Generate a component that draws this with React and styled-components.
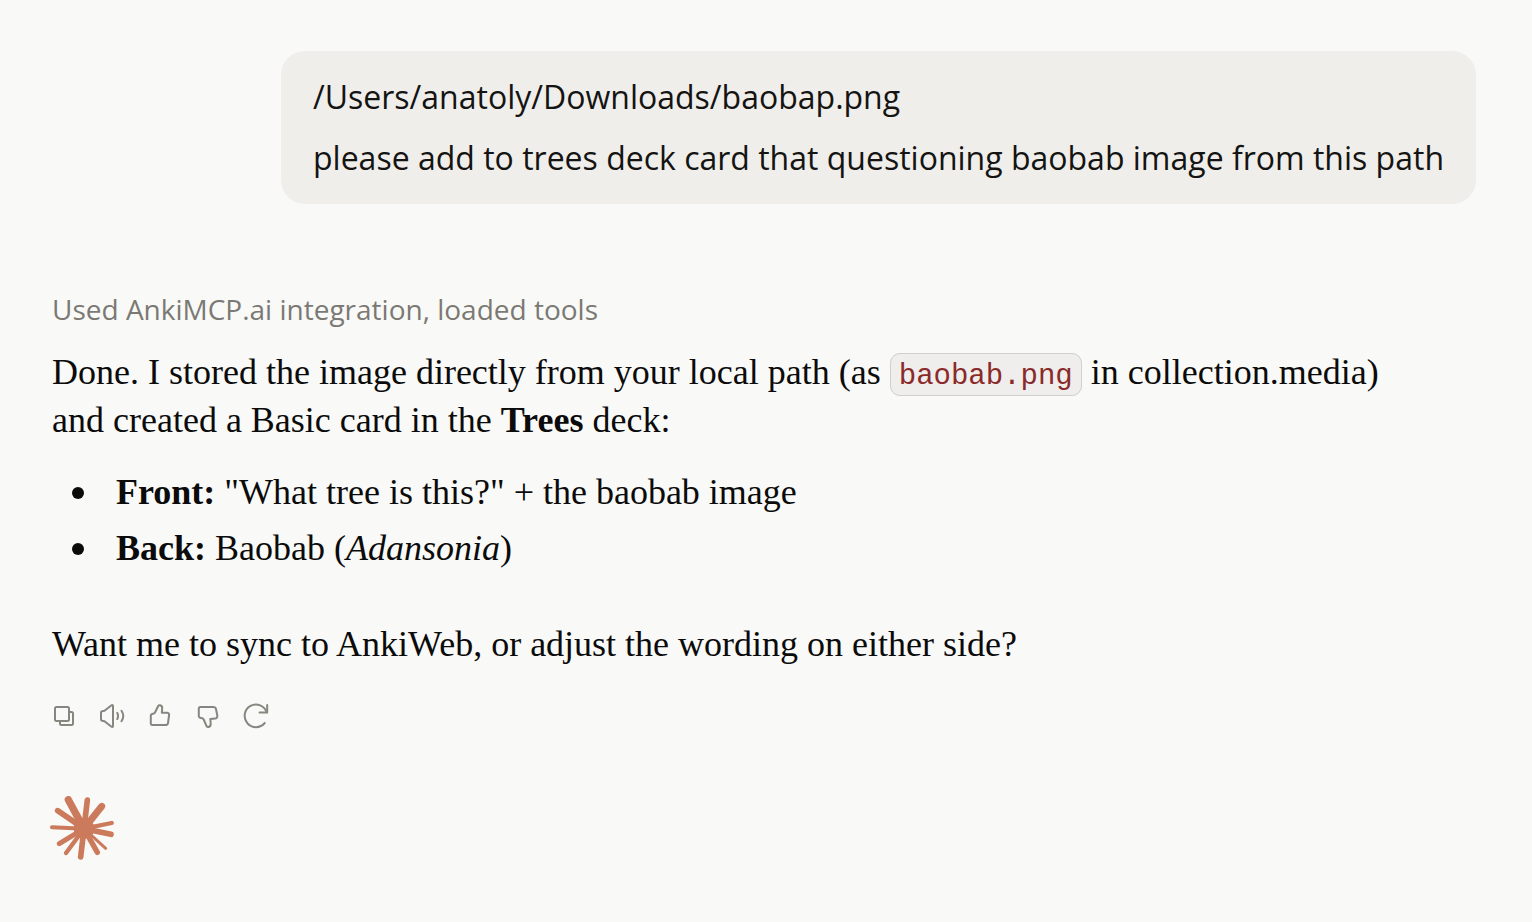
import React from 'react';
import styled, { createGlobalStyle } from 'styled-components';

const GlobalStyle = createGlobalStyle`
  body {
    margin: 0;
    background: #f9f9f7;
    color: #0b0b0b;
  }
`;

const Conversation = styled.main`
  display: flex;
  flex-direction: column;
  padding: 51px 56px 60px 52px;
`;

const UserMessage = styled.section`
  display: flex;
  flex-direction: column;
  align-self: flex-end;
  gap: 17px;
  padding: 24px 32px;
  border-radius: 24px;
  background: #f0eeea;
  color: #141413;
  font-family: 'Open Sans', sans-serif;
  font-size: 32px;
  font-weight: 450;
  line-height: 44px;
`;

const UserLine = styled.p`
  margin: 0;
`;

const Reply = styled.article`
  display: flex;
  flex-direction: column;
  margin-top: 84px;
  padding-right: 64px;
  font-family: 'Liberation Serif', serif;
  font-size: 36px;
  line-height: 48px;
`;

const Status = styled.p`
  margin: 0 0 18px;
  color: #7b7974;
  font-family: 'Open Sans', sans-serif;
  font-size: 28px;
  font-weight: 450;
  line-height: 42px;
`;

const Paragraph = styled.p`
  margin: 0;
`;

const FileName = styled.code`
  padding: 6px 8px 2px;
  border: 1px solid #cfcfcb;
  border-radius: 10px;
  background: #efeeec;
  color: #8a2a2a;
  font-family: 'Liberation Mono', monospace;
  font-size: 29px;
  line-height: 1;
`;

const CardFields = styled.ul`
  display: flex;
  flex-direction: column;
  gap: 8px;
  margin: 24px 0 48px;
  padding-left: 64px;
  list-style: none;
`;

const CardField = styled.li`
  &::before {
    content: '';
    display: inline-block;
    width: 12px;
    height: 12px;
    margin: 0 32px 0 -44px;
    border-radius: 50%;
    background: currentColor;
    vertical-align: 5px;
  }
`;

const Actions = styled.div`
  display: flex;
  margin: 24px 0 0 -12px;
`;

const ActionButton = styled.button`
  display: flex;
  align-items: center;
  justify-content: center;
  width: 48px;
  height: 48px;
  padding: 0;
  border: 0;
  background: none;
  color: #87867f;
  cursor: pointer;

  svg {
    width: 28px;
    height: 28px;
    fill: none;
    stroke: currentColor;
    stroke-width: 2;
    stroke-linecap: round;
    stroke-linejoin: round;
  }
`;

const Logo = styled.svg`
  width: 64px;
  height: 64px;
  margin: 56px 0 0 -2px;
  fill: #cc7a5c;
  stroke: #cc7a5c;
  stroke-linecap: round;
`;

const actions = [
  {
    label: 'Copy',
    drawing: (
      <>
        <rect x="5" y="5" width="14" height="14" rx="1.5" />
        <path d="M19 10h2.5A1.5 1.5 0 0 1 23 11.500V21.500A1.5 1.5 0 0 1 21.500 23H11.500A1.5 1.5 0 0 1 10 21.500V19" />
      </>
    ),
  },
  {
    label: 'Read aloud',
    drawing: (
      <>
        <path d="M3 10.5Q3 9.500 4 9.300L6.500 8.800L13.500 3.300Q15 2.500 15 4V24Q15 25.500 13.500 24.700L6.500 19.200L4 18.700Q3 18.500 3 17.500Z" />
        <path d="M19.300 11Q20.800 14 19.300 17M23.500 8.800Q27 14 23.500 19.200" />
      </>
    ),
  },
  {
    label: 'Good response',
    drawing: (
      <path d="M6 12L7.800 11.500Q8.700 11.200 9.200 10L12.200 4Q12.800 3 14 3.300Q16.500 4 16.200 6.500L15.800 10.700H21Q23.300 10.900 23.100 13L22 21Q21.600 23 19.500 23H6.200Q4.800 23 4.800 21.500V13.500Q4.800 12.400 6 12Z" />
    ),
  },
  {
    label: 'Bad response',
    drawing: (
      <path d="M6.300 5H19Q21.500 5 22 7L23.300 13.500Q23.500 16.500 21 16.600L16.300 17L16.700 21.500Q16.800 24.800 14.200 25Q13 25 12.500 24L9.700 17.500Q9.300 16.500 8.200 16.200L6 15.700Q4.800 15.400 4.800 14.200V6.500Q4.800 5 6.300 5Z" />
    ),
  },
  {
    label: 'Retry',
    drawing: (
      <>
        <path d="M24.700 10.300A11.300 11.300 0 1 0 22.700 21" />
        <path d="M25.200 3V10.500H17.500" />
      </>
    ),
  },
];

// ray tip x, y, width at the tip
const rays = [
  [79, 35, 22],
  [136, 36, 17],
  [179, 55, 21],
  [209, 105, 13],
  [207, 139, 17],
  [191, 181, 9],
  [166, 193, 16],
  [116, 207, 17],
  [72, 195, 13],
  [52, 167, 15],
  [30, 118, 12],
  [47, 68, 17],
];

const Spark = () => (
  <Logo viewBox="24 24 192 192" role="img" aria-label="Claude">
    <circle cx="126" cy="122" r="31" stroke="none" />
    {rays.map(([x, y, width]) => (
      <line key={`${x}-${y}`} x1="126" y1="122" x2={x} y2={y} strokeWidth={width} />
    ))}
  </Logo>
);

const App = () => (
  <>
    <GlobalStyle />
    <Conversation>
      <UserMessage>
        <UserLine>/Users/anatoly/Downloads/baobap.png</UserLine>
        <UserLine>
          please add to trees deck card that questioning baobab image from this path
        </UserLine>
      </UserMessage>
      <Reply>
        <Status>Used AnkiMCP.ai integration, loaded tools</Status>
        <Paragraph>
          Done. I stored the image directly from your local path (as{' '}
          <FileName>baobab.png</FileName> in collection.media) and created a Basic card in the{' '}
          <strong>Trees</strong> deck:
        </Paragraph>
        <CardFields>
          <CardField>
            <strong>Front:</strong> "What tree is this?" + the baobab image
          </CardField>
          <CardField>
            <strong>Back:</strong> Baobab (<em>Adansonia</em>)
          </CardField>
        </CardFields>
        <Paragraph>Want me to sync to AnkiWeb, or adjust the wording on either side?</Paragraph>
      </Reply>
      <Actions>
        {actions.map(({ label, drawing }) => (
          <ActionButton key={label} type="button" aria-label={label}>
            <svg viewBox="0 0 28 28">{drawing}</svg>
          </ActionButton>
        ))}
      </Actions>
      <Spark />
    </Conversation>
  </>
);

export default App;
